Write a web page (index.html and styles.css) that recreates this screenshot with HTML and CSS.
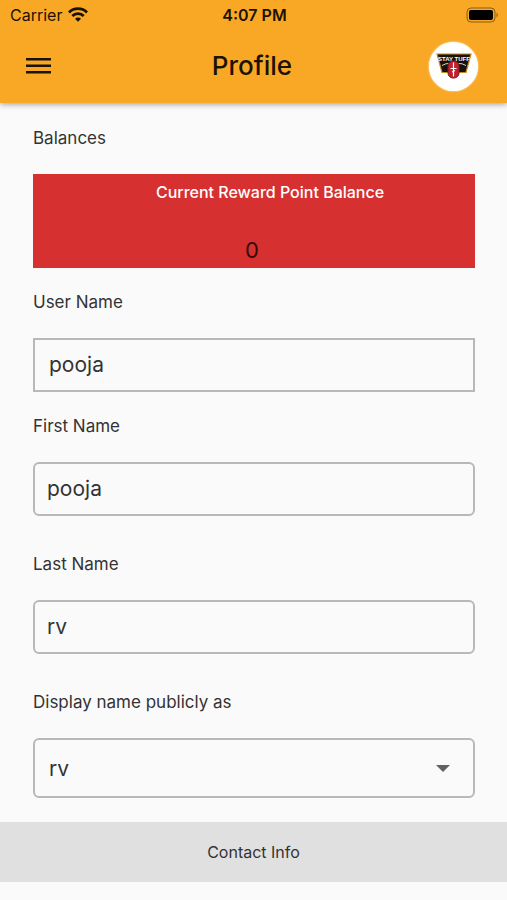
FILE: index.html
```
<!doctype html>
<html lang="en">
<head>
<meta charset="utf-8">
<meta name="viewport" content="width=device-width, initial-scale=1">
<title>Profile</title>
<link rel="stylesheet" href="styles.css">
</head>

<body>
<header class="header">
	<div class="status">
		<div class="carrier">
			<span>Carrier</span>
			<svg width="20" height="15" viewBox="0 0 20 15" fill="none" stroke="#1c1203" stroke-width="2.8">
				<path d="M1 5.4a12.8 12.8 0 0 1 18 0"/>
				<path d="M4.3 9a8 8 0 0 1 11.4 0"/>
				<path d="M10 14.8 7 11.8a4.2 4.2 0 0 1 6 0z" fill="#1c1203" stroke="none"/>
			</svg>
		</div>
		<div class="time">4:07 PM</div>
		<svg class="battery" width="33" height="16" viewBox="0 0 33 16">
			<rect x="1" y="1" width="28" height="14" rx="4" fill="none" stroke="#8a5c12"/>
			<rect x="3" y="3" width="24" height="10" rx="2" fill="#000"/>
			<path d="M30.5 5.5q2.5 2.5 0 5z" fill="#8a5c12"/>
		</svg>
	</div>
	<div class="bar">
		<button class="menu" type="button" aria-label="Menu">
			<svg width="25" height="18" viewBox="0 0 25 18" fill="#1c1203">
				<path d="M0 1h25v2.500H0zM0 7.500h25V10H0zM0 14h25v2.500H0z"/>
			</svg>
		</button>
		<h1>Profile</h1>
		<a class="avatar" href="#" aria-label="Account">
			<svg width="36" height="26" viewBox="0 0 36 26">
				<path d="M1 1h34l-5 18.500H6z" fill="#17120d" stroke="#c58a20" stroke-width="1.2"/>
				<text class="logo-text" x="18" y="8" text-anchor="middle">STAY TUFF</text>
				<path d="M6 12.500q4-2.500 8-2M22 10.500q4-.5 8 2" fill="none" stroke="#d8d4cb"/>
				<rect x="12" y="8" width="11" height="17" rx="5" fill="#c3202b" stroke="#7e1820"/>
				<path d="M17.500 9.500v14M14.500 15.500h6M16 19l3-1.500" stroke="#fff" stroke-width="1.2"/>
			</svg>
		</a>
	</div>
</header>

<form class="profile">
	<h2 class="label">Balances</h2>
	<div class="balance">
		<div class="balance-title">Current Reward Point Balance</div>
		<div class="points">0</div>
	</div>

	<label class="label" for="username">User Name</label>
	<input class="field square" id="username" type="text" value="pooja" readonly>

	<label class="label" for="firstname">First Name</label>
	<input class="field" id="firstname" type="text" value="pooja">

	<label class="label spaced" for="lastname">Last Name</label>
	<input class="field" id="lastname" type="text" value="rv">

	<label class="label spaced" for="display">Display name publicly as</label>
	<div class="select">
		<select class="field" id="display">
			<option>rv</option>
			<option>pooja</option>
			<option>pooja rv</option>
		</select>
		<svg class="arrow" width="14" height="7" viewBox="0 0 14 7"><path d="M0 0h14L7 7z" fill="#616161"/></svg>
	</div>
</form>

<h2 class="section">Contact Info</h2>
</body>
</html>
```
FILE: styles.css
```
*{ box-sizing:border-box; margin:0; padding:0;}
body{
	background:#fafafa;
	color:#333;
	font-family:Inter, "Liberation Sans", sans-serif;
	font-size:17px;
	line-height:24px;
}
svg{ display:block;}

.header{
	background:#f9a825;
	color:#1c1203;
	box-shadow:0 1px 6px rgba(0,0,0,.4);
}
.status{
	display:grid;
	grid-template-columns:1fr auto 1fr;
	align-items:center;
	height:29px;
	padding:0 8px 0 10px;
	font-size:16px;
}
.carrier{ display:flex; align-items:center; gap:6px;}
.time{ font-weight:600;}
.battery{ justify-self:end;}
.bar{
	display:grid;
	grid-template-columns:1fr auto 1fr;
	align-items:center;
	height:74px;
	padding:0 29px 0 26px;
}
.menu{ justify-self:start; border:0; background:none; color:inherit; cursor:pointer;}
h1{ font-size:26px; font-weight:500; line-height:32px;}
.avatar{
	justify-self:end;
	display:flex;
	align-items:center;
	justify-content:center;
	width:49px;
	height:49px;
	border-radius:50%;
	background:#fff;
	box-shadow:0 0 2px #fff;
}
.logo-text{
	fill:#fff;
	font-family:"Liberation Sans", sans-serif;
	font-size:6px;
	font-weight:700;
}

.profile{ padding:23px 32px 24px 33px;}
.label{ display:block; margin:22px 0 24px; font-size:17px; font-weight:400;}
.label:first-child{ margin-top:0;}
.spaced{ margin-top:36px;}
.balance{
	height:94px;
	padding:6px 0 6px 32px;
	background:#d63031;
	text-align:center;
	display:flex;
	flex-direction:column;
	justify-content:space-between;
}
.balance-title{ color:#fff; font-size:16px; font-weight:500;}
.points{ margin-right:36px; color:#35090a; font-size:22px;}
.field{
	display:block;
	width:100%;
	height:54px;
	padding:0 12px 2px;
	border:2px solid #b8b8b8;
	border-radius:6px;
	background:transparent;
	color:#333;
	font-family:inherit;
	font-size:21px;
	outline:none;
}
.square{ padding-left:14px; border-radius:0;}
.select{ position:relative;}
.select .field{ height:60px; padding:0 48px 0 14px; appearance:none;}
.arrow{ position:absolute; right:25px; top:27px; pointer-events:none;}

.section{
	padding:18px;
	background:#e0e0e0;
	font-size:16px;
	font-weight:400;
	text-align:center;
}
```
